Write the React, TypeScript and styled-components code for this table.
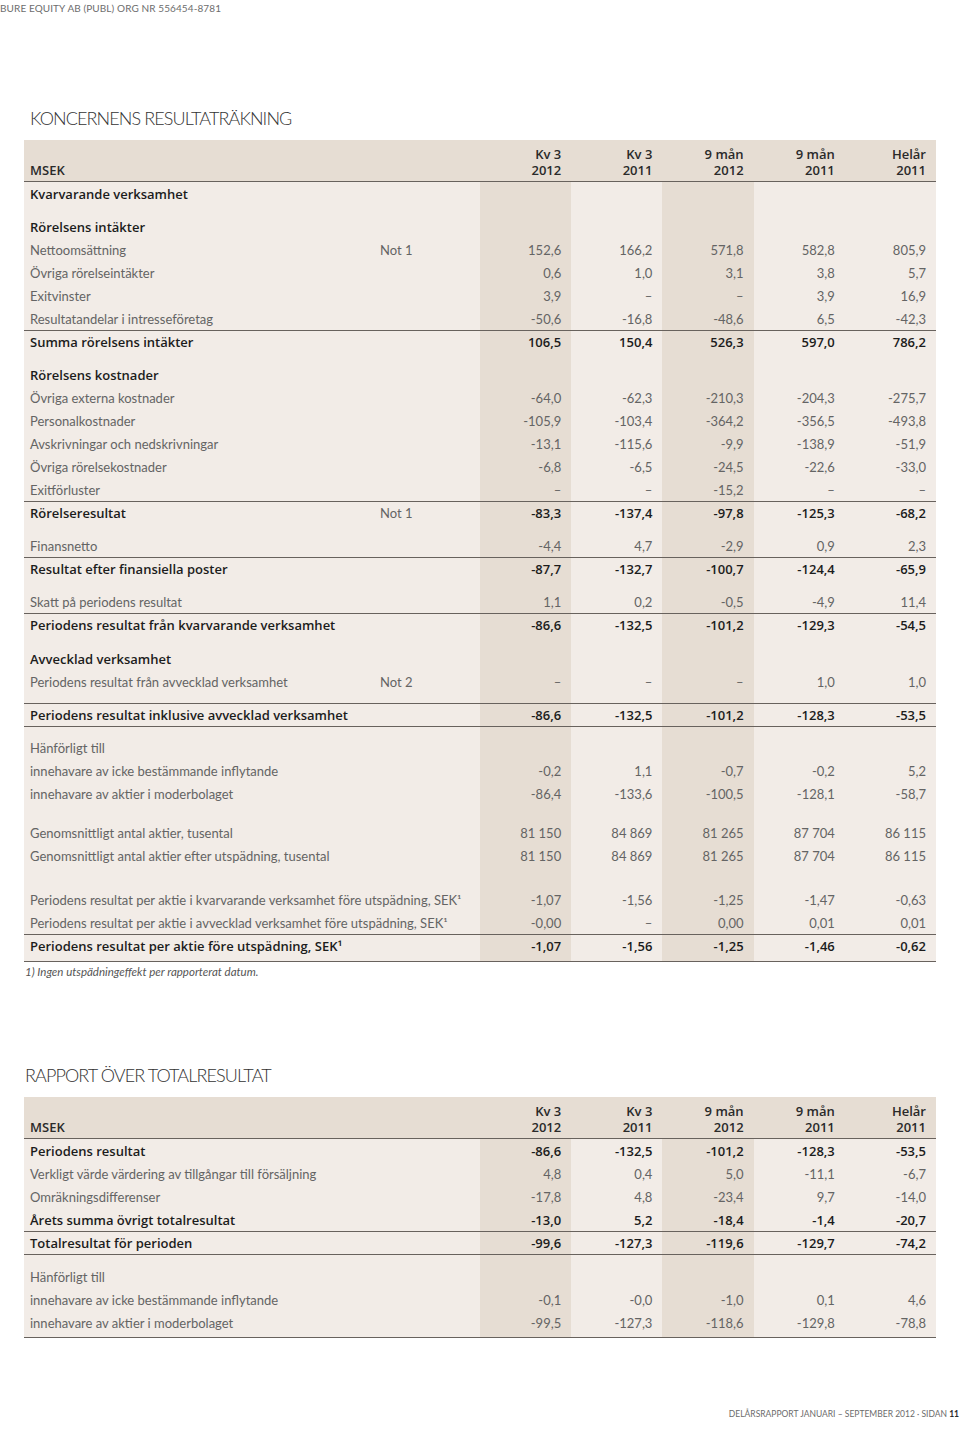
import React from 'react';
import styled, { createGlobalStyle } from 'styled-components';

const Global = createGlobalStyle`
  html, body { margin: 0; padding: 0; background: #ffffff; }
  body { font-family: Lato, "Open Sans", "Liberation Sans", sans-serif; }
`;

const RULE = '#68625d';
const HEAD_BG = '#e6ddd3';
const BODY_BG = '#f2ece7';
const SHADE_BG = '#e6ddd3';
const BOLD_FONT = '"Open Sans", Lato, "Liberation Sans", sans-serif';

const Page = styled.div`
  width: 960px;
  height: 1430px;
  display: flex;
  flex-direction: column;
`;

const TopBar = styled.div`
  padding-top: 1px;
  font-size: 10px;
  line-height: 14px;
  letter-spacing: 0.1px;
  color: #6d6d6d;
  text-transform: uppercase;
`;

const Title = styled.h2<{ $indent: number; $top: number }>`
  margin: ${(p) => p.$top}px 0 10px 0;
  padding-left: ${(p) => p.$indent}px;
  font-size: 18px;
  line-height: 24px;
  font-weight: 300;
  color: #333333;
  letter-spacing: -0.9px;
`;

const Table = styled.div`
  margin: 0 24px;
  width: 912px;
  border-bottom: 1px solid ${RULE};
`;

const Grid = styled.div<{ $h: number; $rule?: boolean }>`
  display: grid;
  grid-template-columns: 356px 100px repeat(5, 1fr);
  height: ${(p) => p.$h}px;
  box-sizing: border-box;
  border-top: ${(p) => (p.$rule ? `1px solid ${RULE}` : 'none')};
`;

const HeadGrid = styled.div`
  display: grid;
  grid-template-columns: 356px 100px repeat(5, 1fr);
  background: ${HEAD_BG};
  height: 42px;
  box-sizing: border-box;
  border-bottom: 1px solid ${RULE};
`;

const HeadCell = styled.div<{ $align: 'left' | 'right' }>`
  display: flex;
  flex-direction: column;
  justify-content: flex-end;
  align-items: ${(p) => (p.$align === 'left' ? 'flex-start' : 'flex-end')};
  padding: 0 10px 3px ${(p) => (p.$align === 'left' ? '6px' : '0')};
  font-family: ${BOLD_FONT};
  font-size: 13px;
  line-height: 16px;
  font-weight: 600;
  color: #2a2a2a;
`;

const Cell = styled.div<{ $shade?: boolean; $bold?: boolean }>`
  background: ${(p) => (p.$shade ? SHADE_BG : BODY_BG)};
  display: flex;
  align-items: center;
  font-family: ${(p) => (p.$bold ? BOLD_FONT : 'inherit')};
  font-size: 13px;
  font-weight: ${(p) => (p.$bold ? 600 : 400)};
  color: ${(p) => (p.$bold ? '#1c1c1c' : '#646464')};
  white-space: nowrap;
`;

const LabelCell = styled(Cell)<{ $span?: boolean }>`
  padding-left: 6px;
  grid-column: ${(p) => (p.$span ? 'span 2' : 'auto')};
`;

const NoteCell = styled(Cell)`
  font-family: inherit;
  font-weight: 400;
  color: #646464;
`;

const ValueCell = styled(Cell)`
  justify-content: flex-end;
  padding-right: 10px;
`;

const Footnote = styled.div`
  margin: 3px 0 0 25px;
  font-size: 11.5px;
  line-height: 14px;
  font-style: italic;
  font-weight: 400;
  color: #555555;
`;

const Footer = styled.div`
  margin-top: auto;
  padding: 0 1px 10px 0;
  text-align: right;
  font-size: 8.5px;
  line-height: 12px;
  letter-spacing: 0;
  color: #6b6b6b;
  text-transform: uppercase;
`;

const PageNo = styled.b`
  font-weight: 700;
  color: #2a2a2a;
`;

type Line =
  | { label: string; note?: string; v?: string[]; bold?: boolean; rule?: boolean }
  | { gap: number; rule?: boolean };

const HEAD: [string, string][] = [
  ['Kv 3', '2012'],
  ['Kv 3', '2011'],
  ['9 mån', '2012'],
  ['9 mån', '2011'],
  ['Helår', '2011'],
];

const D = '–';

const TABLE1: Line[] = [
  { label: 'Kvarvarande verksamhet', bold: true },
  { gap: 10 },
  { label: 'Rörelsens intäkter', bold: true },
  { label: 'Nettoomsättning', note: 'Not 1', v: ['152,6', '166,2', '571,8', '582,8', '805,9'] },
  { label: 'Övriga rörelseintäkter', v: ['0,6', '1,0', '3,1', '3,8', '5,7'] },
  { label: 'Exitvinster', v: ['3,9', D, D, '3,9', '16,9'] },
  { label: 'Resultatandelar i intresseföretag', v: ['-50,6', '-16,8', '-48,6', '6,5', '-42,3'] },
  { label: 'Summa rörelsens intäkter', bold: true, rule: true, v: ['106,5', '150,4', '526,3', '597,0', '786,2'] },
  { gap: 10 },
  { label: 'Rörelsens kostnader', bold: true },
  { label: 'Övriga externa kostnader', v: ['-64,0', '-62,3', '-210,3', '-204,3', '-275,7'] },
  { label: 'Personalkostnader', v: ['-105,9', '-103,4', '-364,2', '-356,5', '-493,8'] },
  { label: 'Avskrivningar och nedskrivningar', v: ['-13,1', '-115,6', '-9,9', '-138,9', '-51,9'] },
  { label: 'Övriga rörelsekostnader', v: ['-6,8', '-6,5', '-24,5', '-22,6', '-33,0'] },
  { label: 'Exitförluster', v: [D, D, '-15,2', D, D] },
  { label: 'Rörelseresultat', note: 'Not 1', bold: true, rule: true, v: ['-83,3', '-137,4', '-97,8', '-125,3', '-68,2'] },
  { gap: 10 },
  { label: 'Finansnetto', v: ['-4,4', '4,7', '-2,9', '0,9', '2,3'] },
  { label: 'Resultat efter finansiella poster', bold: true, rule: true, v: ['-87,7', '-132,7', '-100,7', '-124,4', '-65,9'] },
  { gap: 10 },
  { label: 'Skatt på periodens resultat', v: ['1,1', '0,2', '-0,5', '-4,9', '11,4'] },
  { label: 'Periodens resultat från kvarvarande verksamhet', bold: true, rule: true, v: ['-86,6', '-132,5', '-101,2', '-129,3', '-54,5'] },
  { gap: 11 },
  { label: 'Avvecklad verksamhet', bold: true },
  { label: 'Periodens resultat från avvecklad verksamhet', note: 'Not 2', v: [D, D, D, '1,0', '1,0'] },
  { gap: 10 },
  { label: 'Periodens resultat inklusive avvecklad verksamhet', bold: true, rule: true, v: ['-86,6', '-132,5', '-101,2', '-128,3', '-53,5'] },
  { gap: 10, rule: true },
  { label: 'Hänförligt till' },
  { label: 'innehavare av icke bestämmande inflytande', v: ['-0,2', '1,1', '-0,7', '-0,2', '5,2'] },
  { label: 'innehavare av aktier i moderbolaget', v: ['-86,4', '-133,6', '-100,5', '-128,1', '-58,7'] },
  { gap: 16 },
  { label: 'Genomsnittligt antal aktier, tusental', v: ['81 150', '84 869', '81 265', '87 704', '86 115'] },
  { label: 'Genomsnittligt antal aktier efter utspädning, tusental', v: ['81 150', '84 869', '81 265', '87 704', '86 115'] },
  { gap: 21 },
  { label: 'Periodens resultat per aktie i kvarvarande verksamhet före utspädning, SEK¹', v: ['-1,07', '-1,56', '-1,25', '-1,47', '-0,63'] },
  { label: 'Periodens resultat per aktie i avvecklad verksamhet före utspädning, SEK¹', v: ['-0,00', D, '0,00', '0,01', '0,01'] },
  { label: 'Periodens resultat per aktie före utspädning, SEK¹', bold: true, rule: true, v: ['-1,07', '-1,56', '-1,25', '-1,46', '-0,62'] },
  { gap: 4 },
];

const TABLE2: Line[] = [
  { label: 'Periodens resultat', bold: true, v: ['-86,6', '-132,5', '-101,2', '-128,3', '-53,5'] },
  { label: 'Verkligt värde värdering av tillgångar till försäljning', v: ['4,8', '0,4', '5,0', '-11,1', '-6,7'] },
  { label: 'Omräkningsdifferenser', v: ['-17,8', '4,8', '-23,4', '9,7', '-14,0'] },
  { label: 'Årets summa övrigt totalresultat', bold: true, v: ['-13,0', '5,2', '-18,4', '-1,4', '-20,7'] },
  { label: 'Totalresultat för perioden', bold: true, rule: true, v: ['-99,6', '-127,3', '-119,6', '-129,7', '-74,2'] },
  { gap: 11, rule: true },
  { label: 'Hänförligt till' },
  { label: 'innehavare av icke bestämmande inflytande', v: ['-0,1', '-0,0', '-1,0', '0,1', '4,6'] },
  { label: 'innehavare av aktier i moderbolaget', v: ['-99,5', '-127,3', '-118,6', '-129,8', '-78,8'] },
  { gap: 3 },
];

const Values: React.FC<{ v?: string[]; bold?: boolean }> = ({ v, bold }) => (
  <>
    {[0, 1, 2, 3, 4].map((i) => (
      <ValueCell key={i} $shade={i === 0 || i === 2} $bold={bold}>
        {v ? v[i] : ''}
      </ValueCell>
    ))}
  </>
);

const FinTable: React.FC<{ lines: Line[] }> = ({ lines }) => (
  <Table>
    <HeadGrid>
      <HeadCell $align="left">MSEK</HeadCell>
      <HeadCell $align="right" />
      {HEAD.map(([a, b], i) => (
        <HeadCell key={i} $align="right">
          <span>{a}</span>
          <span>{b}</span>
        </HeadCell>
      ))}
    </HeadGrid>
    {lines.map((l, i) =>
      'gap' in l ? (
        <Grid key={i} $h={l.gap} $rule={l.rule}>
          <LabelCell $span />
          <Values />
        </Grid>
      ) : (
        <Grid key={i} $h={23} $rule={l.rule}>
          <LabelCell $span={!l.note} $bold={l.bold}>
            {l.label}
          </LabelCell>
          {l.note && <NoteCell>{l.note}</NoteCell>}
          <Values v={l.v} bold={l.bold} />
        </Grid>
      )
    )}
  </Table>
);

export default function App() {
  return (
    <>
      <Global />
      <Page>
        <TopBar>Bure Equity AB (publ) org nr 556454-8781</TopBar>
        <Title $indent={30} $top={91}>
          KONCERNENS RESULTATRÄKNING
        </Title>
        <FinTable lines={TABLE1} />
        <Footnote>1) Ingen utspädningeffekt per rapporterat datum.</Footnote>
        <Title $indent={25} $top={84}>
          RAPPORT ÖVER TOTALRESULTAT
        </Title>
        <FinTable lines={TABLE2} />
        <Footer>
          Delårsrapport januari – september 2012 · sidan <PageNo>11</PageNo>
        </Footer>
      </Page>
    </>
  );
}
